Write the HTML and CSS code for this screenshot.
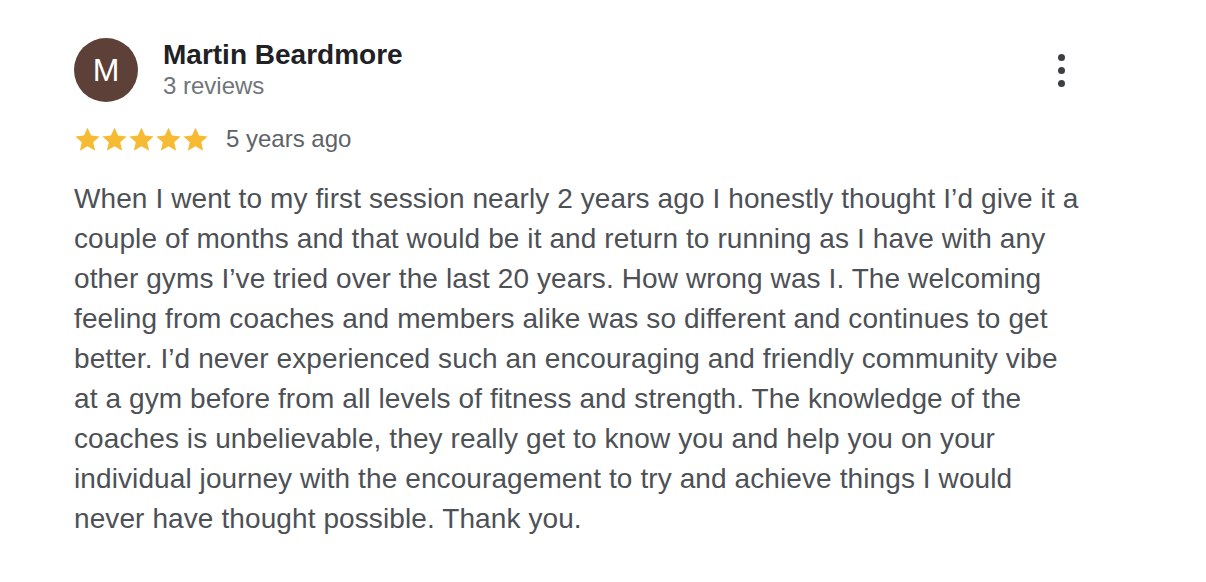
FILE: index.html
```html
<!DOCTYPE html>
<html>
<head>
<meta charset="utf-8">
<link rel="stylesheet" href="styles.css">
</head>
<body>
<div class="review">
  <div class="header">
    <div class="avatar">M</div>
    <div class="who">
      <div class="name">Martin Beardmore</div>
      <div class="count">3 reviews</div>
    </div>
    <div class="more" aria-label="More options">
      <span class="dot"></span><span class="dot"></span><span class="dot"></span>
    </div>
  </div>
  <div class="meta">
    <div class="stars">
      <svg viewBox="0 0 24 24" class="star"><path d="M12 1.5l3.2 7 7.6.8-5.7 5.1 1.7 7.5L12 18l-6.8 3.9 1.7-7.5-5.7-5.1 7.6-.8z"/></svg>
      <svg viewBox="0 0 24 24" class="star"><path d="M12 1.5l3.2 7 7.6.8-5.7 5.1 1.7 7.5L12 18l-6.8 3.9 1.7-7.5-5.7-5.1 7.6-.8z"/></svg>
      <svg viewBox="0 0 24 24" class="star"><path d="M12 1.5l3.2 7 7.6.8-5.7 5.1 1.7 7.5L12 18l-6.8 3.9 1.7-7.5-5.7-5.1 7.6-.8z"/></svg>
      <svg viewBox="0 0 24 24" class="star"><path d="M12 1.5l3.2 7 7.6.8-5.7 5.1 1.7 7.5L12 18l-6.8 3.9 1.7-7.5-5.7-5.1 7.6-.8z"/></svg>
      <svg viewBox="0 0 24 24" class="star"><path d="M12 1.5l3.2 7 7.6.8-5.7 5.1 1.7 7.5L12 18l-6.8 3.9 1.7-7.5-5.7-5.1 7.6-.8z"/></svg>
    </div>
    <span class="when">5 years ago</span>
  </div>
  <p class="text">When I went to my first session nearly 2 years ago I honestly thought I’d give it a couple of months and that would be it and return to running as I have with any other gyms I’ve tried over the last 20 years. How wrong was I. The welcoming feeling from coaches and members alike was so different and continues to get better. I’d never experienced such an encouraging and friendly community vibe at a gym before from all levels of fitness and strength. The knowledge of the coaches is unbelievable, they really get to know you and help you on your individual journey with the encouragement to try and achieve things I would never have thought possible. Thank you.</p>
</div>
</body>
</html>
```
FILE: styles.css
```css
html, body {
  margin: 0;
  padding: 0;
  background: #ffffff;
}
body {
  font-family: "Liberation Sans", Arial, Helvetica, sans-serif;
  width: 1206px;
  height: 582px;
  overflow: hidden;
}
.review {
  padding: 38px 0 0 74px;
  width: 1008px;
}
.header {
  display: flex;
  align-items: flex-start;
}
.avatar {
  width: 64px;
  height: 64px;
  border-radius: 50%;
  background: #5d4037;
  color: #ffffff;
  font-size: 32px;
  line-height: 64px;
  text-align: center;
  flex: none;
}
.who {
  margin-left: 25px;
  flex: 1;
}
.name {
  font-size: 28px;
  font-weight: bold;
  color: #202124;
  line-height: 32px;
  margin-top: 1px;
}
.count {
  font-size: 24px;
  color: #70757a;
  line-height: 30px;
}
.more {
  display: flex;
  flex-direction: column;
  gap: 6px;
  margin-top: 16px;
  margin-right: 17px;
  width: 7px;
}
.dot {
  width: 7px;
  height: 7px;
  border-radius: 50%;
  background: #3c4043;
}
.meta {
  display: flex;
  align-items: center;
  margin-top: 22px;
  height: 30px;
}
.stars {
  display: flex;
}
.star {
  width: 27px;
  height: 27px;
  fill: #f6bb32;
}
.when {
  margin-left: 17px;
  font-size: 24px;
  color: #5f6368;
}
.text {
  margin: 25px 0 0;
  font-size: 28px;
  letter-spacing: 0.1px;
  line-height: 40px;
  color: #4d5156;
}
```
